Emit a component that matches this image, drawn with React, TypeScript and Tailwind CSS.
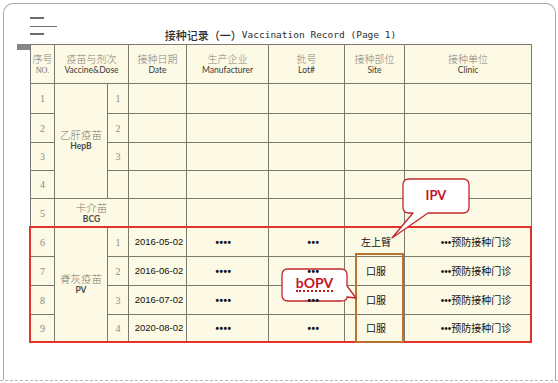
import React from 'react';

type Row = {
  no: number;
  dose?: string;
  date?: string;
  maker?: string;
  lot?: string;
  site?: string;
  clinic?: string;
  h: string;
};

const rows: Row[] = [
  { no: 1, dose: '1', h: 'h-[30px]' },
  { no: 2, dose: '2', h: 'h-[29px]' },
  { no: 3, dose: '3', h: 'h-[28px]' },
  { no: 4, dose: '', h: 'h-[28px]' },
  { no: 5, h: 'h-[29px]' },
  { no: 6, dose: '1', date: '2016-05-02', maker: '••••', lot: '•••', site: '左上臂', clinic: '•••预防接种门诊', h: 'h-[29px]' },
  { no: 7, dose: '2', date: '2016-06-02', maker: '••••', lot: '•••', site: '口服', clinic: '•••预防接种门诊', h: 'h-[29px]' },
  { no: 8, dose: '3', date: '2016-07-02', maker: '••••', lot: '•••', site: '口服', clinic: '•••预防接种门诊', h: 'h-[29px]' },
  { no: 9, dose: '4', date: '2020-08-02', maker: '••••', lot: '•••', site: '口服', clinic: '•••预防接种门诊', h: 'h-[28px]' },
];

const cell = 'border border-[#7c7a6e] p-0 text-center align-middle';
const zh = "font-['Noto_Sans_CJK_SC',sans-serif] font-light text-[10px] leading-[12px] text-[#85827a]";
const en = "font-['Lato','Open_Sans',sans-serif] text-[8.5px] leading-[11px] text-[#3a3a3a]";
const num = "font-['Liberation_Serif',serif] text-[10px] text-[#8d8a82]";

function HeadCell({ zhText, enText, span, serifEn }: { zhText: string; enText: string; span?: number; serifEn?: boolean }) {
  return (
    <th colSpan={span} className={`${cell} font-normal`}>
      <div className={zh}>{zhText}</div>
      <div className={serifEn ? "font-['Liberation_Serif',serif] text-[8px] leading-[11px] text-[#6f6c66]" : en}>{enText}</div>
    </th>
  );
}

function VaccineName({ zhText, enText }: { zhText: string; enText: string }) {
  return (
    <>
      <div className="font-['Noto_Sans_CJK_SC',sans-serif] font-light text-[10.5px] leading-[12px] text-[#7d7a72]">{zhText}</div>
      <div className="font-['Lato','Open_Sans',sans-serif] font-bold text-[8.5px] leading-[11px] text-[#4a4a4a]">{enText}</div>
    </>
  );
}

export default function App() {
  return (
    <div className="relative w-[558px] h-[383px] bg-white overflow-hidden font-['Liberation_Sans','Noto_Sans_CJK_SC',sans-serif]">
      {/* torn page edge */}
      <div className="h-[381px] border-b border-dashed border-[#b9b9b9] pt-[3px] pl-[3px] pr-[2px]">
        <div className="h-full rounded-t-[10px] border border-b-0 border-[#a9a9a9]">
          {/* top bar */}
          <div className="ml-[26px] w-[501px] h-[40px] grid grid-cols-[40px_1fr_40px]">
            <div className="flex flex-col pt-[13px]">
              <div className="h-[1.5px] w-[14px] bg-[#6e6e6e]" />
              <div className="h-[1.5px] w-[27px] bg-[#6e6e6e] mt-[7px]" />
              <div className="h-[1.5px] w-[14px] bg-[#6e6e6e] mt-[6px]" />
            </div>
            <div className="flex items-end justify-center pb-[2px] whitespace-nowrap text-[#2e2e2e]">
              <span className="font-['Noto_Sans_CJK_SC',sans-serif] font-medium text-[11px] leading-[14px]">接种记录（一）</span>
              <span className="font-['DejaVu_Sans_Mono',monospace] text-[9.5px] leading-[14px]">Vaccination Record (Page 1)</span>
            </div>
            <div />
          </div>

          <div className="flex pl-[13px]">
            <div className="w-[13px] h-[6px] bg-[#868686]" />
            <table className="table-fixed w-[501px] bg-[#fcf9e4] border-collapse">
              <colgroup>
                <col className="w-[24px]" />
                <col className="w-[53px]" />
                <col className="w-[21px]" />
                <col className="w-[58px]" />
                <col className="w-[82px]" />
                <col className="w-[76px]" />
                <col className="w-[60px]" />
                <col className="w-[127px]" />
              </colgroup>
              <thead>
                <tr className="h-[39px]">
                  <HeadCell zhText="序号" enText="NO." serifEn />
                  <HeadCell zhText="疫苗与剂次" enText="Vaccine&Dose" span={2} />
                  <HeadCell zhText="接种日期" enText="Date" />
                  <HeadCell zhText="生产企业" enText="Manufacturer" />
                  <HeadCell zhText="批号" enText="Lot#" />
                  <HeadCell zhText="接种部位" enText="Site" />
                  <HeadCell zhText="接种单位" enText="Clinic" />
                </tr>
              </thead>
              <tbody>
                {rows.map((r) => (
                  <tr key={r.no} className={r.h}>
                    <td className={`${cell} ${num}`}>{r.no}</td>
                    {r.no === 1 && (
                      <td rowSpan={4} className={`${cell} pb-[2px]`}>
                        <VaccineName zhText="乙肝疫苗" enText="HepB" />
                      </td>
                    )}
                    {r.no === 6 && (
                      <td rowSpan={4} className={`${cell} pb-[2px]`}>
                        <VaccineName zhText="脊灰疫苗" enText="PV" />
                      </td>
                    )}
                    {r.no === 5 ? (
                      <td colSpan={2} className={cell}>
                        <VaccineName zhText="卡介苗" enText="BCG" />
                      </td>
                    ) : (
                      <td className={`${cell} ${num}`}>{r.dose}</td>
                    )}
                    <td className={`${cell} text-[9.5px] text-[#111] pl-[3px]`}>{r.date}</td>
                    <td className={`${cell} text-[10px] font-bold text-[#111] tracking-[0.5px] pr-[8px]`}>{r.maker}</td>
                    <td className={`${cell} text-[10px] font-bold text-[#111] tracking-[0.5px] pl-[14px]`}>
                      <span className="relative z-10">{r.lot}</span>
                    </td>
                    <td className={`${cell} text-[10px] text-[#111] pl-[3px]`}>{r.site}</td>
                    <td className={`${cell} text-[10px] text-[#111] pl-[16px]`}>{r.clinic}</td>
                  </tr>
                ))}
              </tbody>
            </table>
          </div>
        </div>
      </div>

      {/* red frame around the polio rows */}
      <div className="absolute left-[29px] top-[226px] w-[503px] h-[117px] border-2 border-[#e2332c] pointer-events-none" />
      {/* orange frame around oral doses */}
      <div className="absolute left-[355px] top-[253px] w-[49px] h-[90px] border-2 border-[#b8732f] pointer-events-none" />

      {/* IPV callout */}
      <svg className="absolute left-[390px] top-[177px]" width="82" height="64" viewBox="0 0 82 64">
        <path
          d="M19 2 H73 Q79 2 79 8 V30 Q79 36 73 36 H38 L2 61 L23 36 H19 Q13 36 13 30 V8 Q13 2 19 2 Z"
          fill="white"
          stroke="#c0262e"
          strokeWidth="1.3"
          strokeLinejoin="round"
        />
      </svg>
      <div className="absolute left-[403px] top-[179px] w-[66px] h-[34px] flex items-center justify-center font-['Lato','Open_Sans',sans-serif] font-bold text-[13px] text-[#c4141f]">
        IPV
      </div>

      {/* bOPV callout */}
      <svg className="absolute left-[280px] top-[267px]" width="80" height="37" viewBox="0 0 80 37">
        <path
          d="M8 2 H61 Q67 2 67 8 V19 L76 31 L67 30 Q67 34 61 34 H8 Q2 34 2 28 V8 Q2 2 8 2 Z"
          fill="white"
          stroke="#c0262e"
          strokeWidth="1.3"
          strokeLinejoin="round"
        />
      </svg>
      <div className="absolute left-[282px] top-[269px] w-[65px] h-[32px] flex items-center justify-center pb-[3px]">
        <span className="font-['Lato','Open_Sans',sans-serif] font-bold text-[14px] leading-[15px] text-[#c4141f] border-b-2 border-dotted border-[#c4141f]">
          bOPV
        </span>
      </div>
    </div>
  );
}
